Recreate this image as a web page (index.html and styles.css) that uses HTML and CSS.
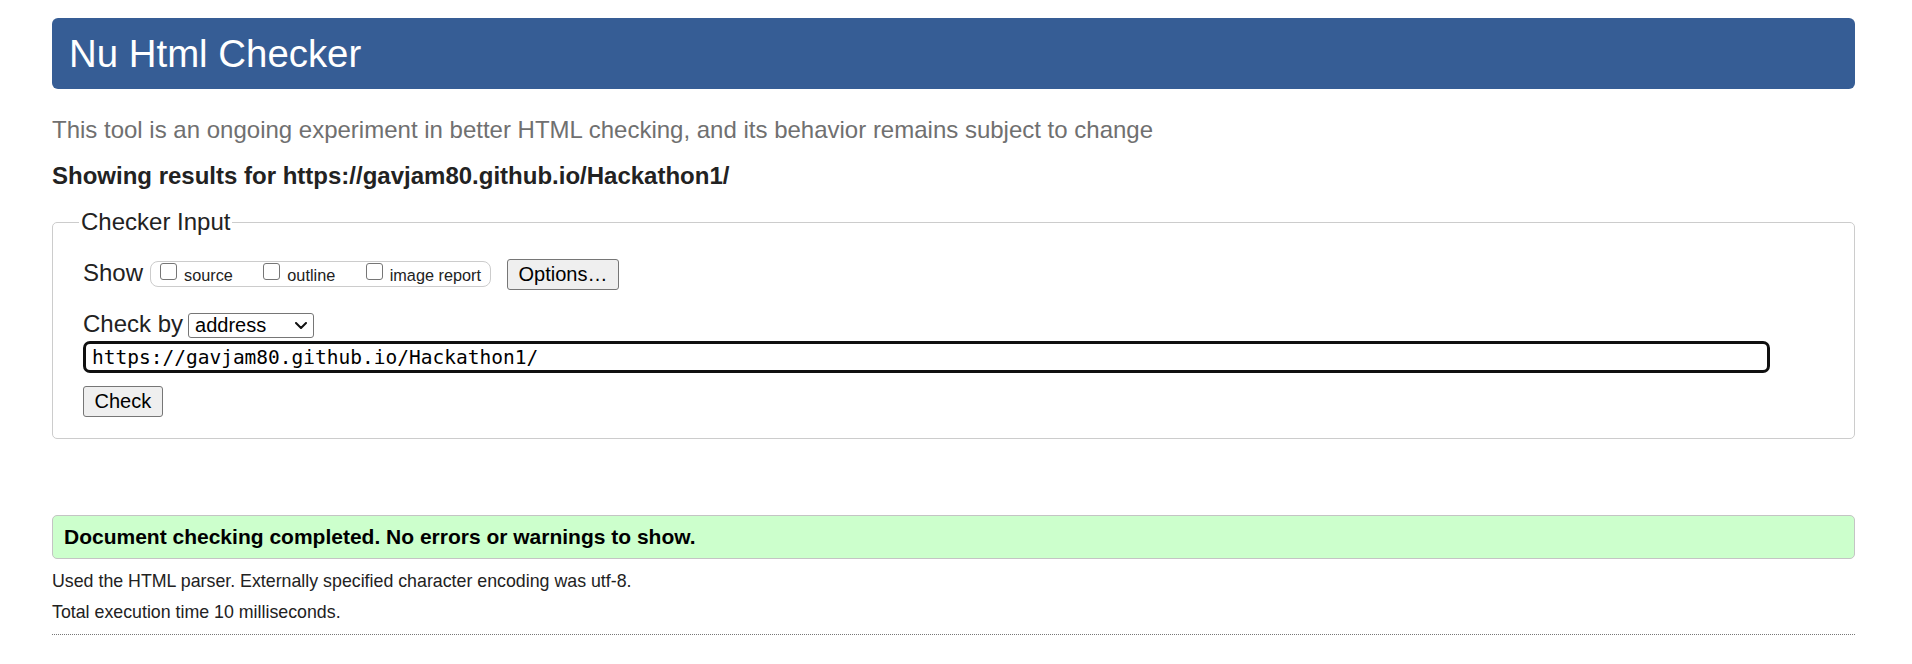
FILE: index.html
```html
<!DOCTYPE html>
<html lang="en">
<head>
<meta charset="utf-8">
<title>Showing results for https://gavjam80.github.io/Hackathon1/ - Nu Html Checker</title>
<link rel="stylesheet" href="styles.css">
</head>
<body>
<div class="page">
  <h1 class="banner">Nu Html Checker</h1>
  <p class="about">This tool is an ongoing experiment in better HTML checking, and its behavior remains subject to change</p>
  <p class="showing">Showing results for https://gavjam80.github.io/Hackathon1/</p>
  <form class="checker" action="#">
    <fieldset class="checker-set">
      <legend class="checker-legend">Checker Input</legend>
      <div class="row row-show">
        <span class="row-label label-show">Show</span>
        <span class="opts">
          <label class="opt"><input type="checkbox" class="cb"><span class="opt-text">source</span></label>
          <label class="opt"><input type="checkbox" class="cb"><span class="opt-text">outline</span></label>
          <label class="opt"><input type="checkbox" class="cb"><span class="opt-text">image report</span></label>
        </span>
        <button type="button" class="btn btn-options">Options…</button>
      </div>
      <div class="row row-by">
        <span class="row-label label-by">Check by</span>
        <span class="select-wrap">
          <select class="sel"><option>address</option></select>
          <svg class="chev" width="12" height="7" viewBox="0 0 12 7" aria-hidden="true"><path d="M1 1 L6 6 L11 1" fill="none" stroke="#111" stroke-width="2" stroke-linecap="round" stroke-linejoin="round"/></svg>
        </span>
      </div>
      <input class="url" type="url" value="https://gavjam80.github.io/Hackathon1/">
      <div class="row row-submit">
        <button type="button" class="btn">Check</button>
      </div>
    </fieldset>
  </form>
  <div class="success"><p class="success-text">Document checking completed. No errors or warnings to show.</p></div>
  <p class="stats stats-first">Used the HTML parser. Externally specified character encoding was utf-8.</p>
  <p class="stats">Total execution time 10 milliseconds.</p>
  <hr class="sep">
</div>
</body>
</html>
```
FILE: styles.css
```css
html, body {
  margin: 0;
  padding: 0;
  background: #fff;
}

body {
  font-family: "Liberation Sans", Arial, sans-serif;
  color: #222;
}

.page {
  padding: 18px 57px 0 52px;
}

.banner {
  margin: 0;
  height: 71px;
  line-height: 71px;
  padding: 0 17px;
  background: #365d95;
  color: #fff;
  font-weight: normal;
  font-size: 38.4px;
  border-radius: 6px;
}

.about {
  margin: 27px 0 0;
  font-size: 24px;
  line-height: 28px;
  color: #707070;
}

.showing {
  margin: 18px 0 0;
  font-size: 24px;
  line-height: 28px;
  font-weight: bold;
  color: #222;
}

.checker {
  margin: 18px 0 0;
}

.checker-set {
  margin: 0;
  min-width: 0;
  border: 1px solid #ccc;
  border-radius: 5px;
  padding: 23px 84px 21px 30px;
}

.checker-legend {
  font-size: 24px;
  line-height: 28px;
  padding: 0 2px;
  margin-left: -4px;
}

.row {
  display: flex;
  align-items: baseline;
}

.row-label {
  font-size: 24px;
  line-height: 28px;
}

.label-show {
  margin-right: 7px;
}

.label-by {
  margin-right: 5px;
}

.row-by {
  margin-top: 20px;
}

.opts {
  display: flex;
  align-items: baseline;
  gap: 30.5px;
  border: 1px solid #ccc;
  border-radius: 8px;
  padding: 1px 9px;
}

.opt {
  display: block;
  font-size: 16.25px;
  color: #222;
}

.cb {
  -webkit-appearance: none;
  appearance: none;
  display: inline-block;
  width: 17px;
  height: 17px;
  margin: 0;
  border: 1px solid #767676;
  border-radius: 3px;
  background: #fff;
  vertical-align: 1px;
  box-sizing: border-box;
}

.opt-text {
  margin-left: 7px;
}

.btn {
  font-family: "Liberation Sans", Arial, sans-serif;
  font-size: 20px;
  line-height: 23px;
  color: #000;
  background: #efefef;
  border: 1px solid #767676;
  border-radius: 3px;
  padding: 3px 10.5px;
  margin: 0;
}

.btn-options {
  margin-left: 16px;
}

.select-wrap {
  position: relative;
  display: inline-block;
}

.sel {
  -webkit-appearance: none;
  appearance: none;
  width: 126px;
  box-sizing: border-box;
  font-family: "Liberation Sans", Arial, sans-serif;
  font-size: 20px;
  line-height: 23px;
  height: 25px;
  padding: 0 28px 0 6px;
  margin: 0;
  border: 1px solid #767676;
  border-radius: 3px;
  background: #fff;
  color: #000;
}

.chev {
  position: absolute;
  right: 7px;
  top: 9px;
  pointer-events: none;
}

.url {
  display: block;
  width: 100%;
  box-sizing: border-box;
  height: 32px;
  margin: 3px 0 0;
  padding: 0 6px;
  border: 3px solid #101010;
  border-radius: 7px;
  font-family: "DejaVu Sans Mono", "Liberation Mono", monospace;
  font-size: 19.5px;
  color: #000;
  background: #fff;
  outline: none;
}

.row-submit {
  margin-top: 13px;
}

.success {
  margin-top: 76px;
  background: #ccffcc;
  border: 1px solid #c4c4c4;
  border-radius: 5px;
}

.success-text {
  margin: 0;
  padding: 9px 11px 9px;
  font-size: 21px;
  line-height: 24px;
  font-weight: bold;
  color: #000;
}

.stats {
  margin: 10px 0 0;
  font-size: 17.8px;
  line-height: 21px;
  color: #222;
}

.stats-first {
  margin-top: 12px;
}

.sep {
  margin: 11px 0 0;
  height: 0;
  border: 0;
  border-top: 1px dotted #777;
}
```
